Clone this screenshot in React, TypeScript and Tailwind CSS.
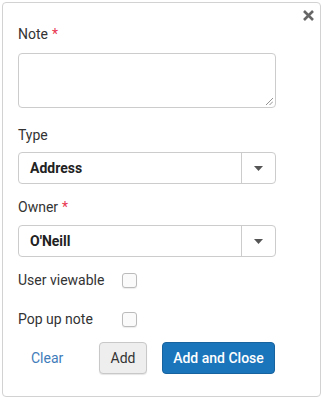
import React from 'react';

const Req = () => <span className="text-[#e8364f] ml-1">*</span>;

const Caret = () => (
  <svg width="9" height="5" viewBox="0 0 9 5" className="fill-[#555]">
    <path d="M0 0h9L4.5 5z" />
  </svg>
);

const SelectBox: React.FC<{ value: string; className?: string }> = ({ value, className }) => (
  <div
    className={`flex h-[32px] w-[258px] rounded-[4px] border border-[#ccc] bg-white ${className ?? ''}`}
  >
    <div className="flex flex-1 items-center pl-[11px] text-[14px] font-bold text-[#222]">{value}</div>
    <div className="flex w-[34px] items-center justify-center border-l border-[#ccc]">
      <Caret />
    </div>
  </div>
);

const CheckRow: React.FC<{ label: string; className?: string }> = ({ label, className }) => (
  <div className={`flex h-[20px] items-center ${className ?? ''}`}>
    <span className="w-[104px] text-[14px] text-[#333]">{label}</span>
    <span className="h-[15px] w-[15px] rounded-[3px] border border-[#bbb] bg-[#fafafa] shadow-[0_1px_1px_rgba(0,0,0,0.08)]" />
  </div>
);

export default function App() {
  return (
    <div className="bg-white p-[2px]" style={{ fontFamily: 'Roboto, "Liberation Sans", sans-serif' }}>
      <div className="relative h-[395px] w-[319px] rounded-[4px] border border-[#d2d2d2] pl-[15px] pt-[21px]">
        <button className="absolute right-[5px] top-[5px] flex h-[14px] w-[14px] items-center justify-center">
          <svg width="11" height="11" viewBox="0 0 11 11" className="stroke-[#666]" strokeWidth="2.6">
            <path d="M1 1l9 9M10 1l-9 9" />
          </svg>
        </button>

        <div className="text-[14px] leading-[20px] text-[#333]">
          Note<Req />
        </div>
        <div className="relative mt-[9px] h-[55px] w-[258px] rounded-[4px] border border-[#ccc]">
          <svg width="7" height="7" viewBox="0 0 7 7" className="absolute bottom-[2px] right-[2px] stroke-[#777]" strokeWidth="0.8">
            <path d="M7 0L0 7M7 3.5L3.5 7" />
          </svg>
        </div>

        <div className="mt-[17px] text-[14px] leading-[20px] text-[#333]">Type</div>
        <SelectBox value="Address" className="mt-[7px]" />

        <div className="mt-[13px] text-[14px] leading-[20px] text-[#333]">
          Owner<Req />
        </div>
        <SelectBox value="O'Neill" className="mt-[8px]" />

        <CheckRow label="User viewable" className="mt-[13px]" />
        <CheckRow label="Pop up note" className="mt-[19px]" />

        <div className="mt-[13px] flex items-center">
          <button className="ml-[13px] w-[68px] text-left text-[14px] text-[#3f7cba]">Clear</button>
          <button className="h-[32px] w-[48px] rounded-[4px] border border-[#c8c8c8] bg-[#eee] text-[14px] text-[#333] shadow-[0_1px_1px_rgba(0,0,0,0.1)]">
            Add
          </button>
          <button className="ml-[15px] h-[32px] w-[113px] rounded-[4px] border border-[#16639f] bg-[#1b75bb] text-[14px] font-medium text-white">
            Add and Close
          </button>
        </div>
      </div>
    </div>
  );
}
